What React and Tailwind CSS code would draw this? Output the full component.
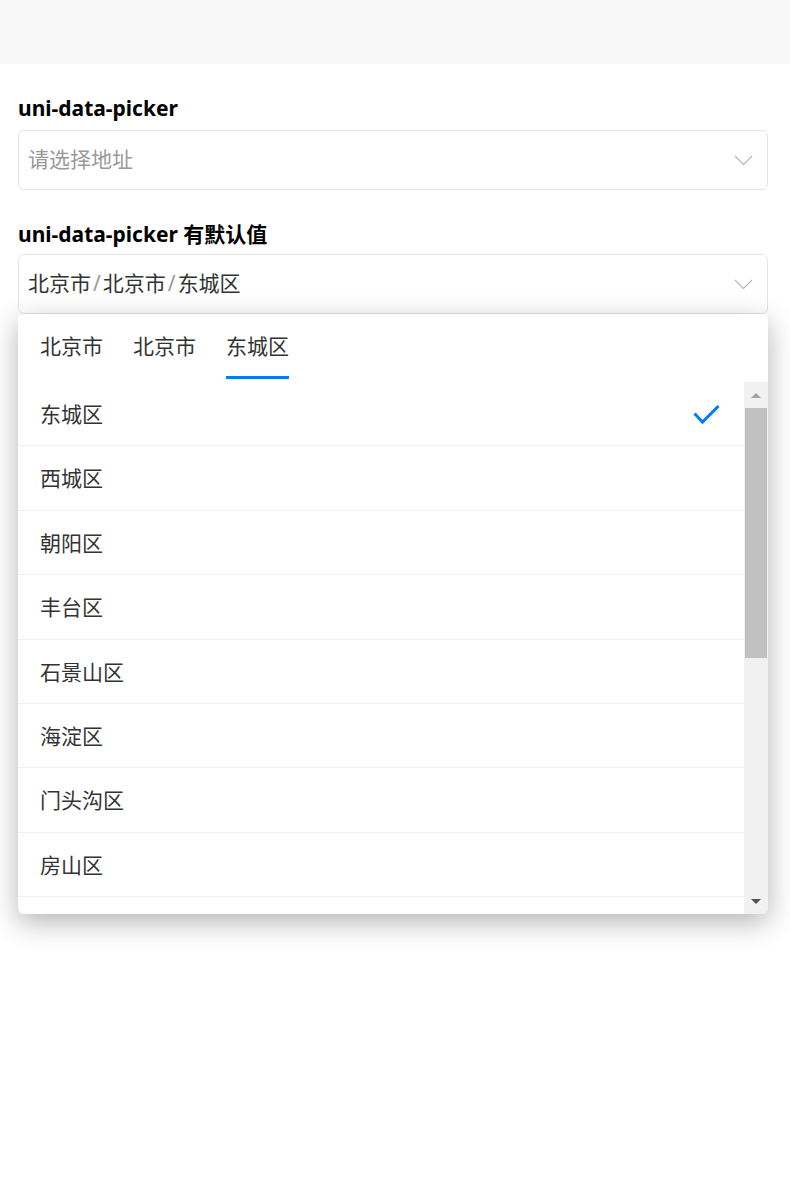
import React from "react";

const districts = ["东城区", "西城区", "朝阳区", "丰台区", "石景山区", "海淀区", "门头沟区", "房山区"];
const tabs = ["北京市", "北京市", "东城区"];

const Chevron = () => (
  <svg width="19" height="11" viewBox="0 0 19 11" fill="none" className="shrink-0">
    <polyline points="1,1 9.5,9.5 18,1" stroke="#b5b5b5" strokeWidth="1.2" />
  </svg>
);

const CheckMark = () => (
  <svg width="27" height="21" viewBox="0 0 27 21" fill="none">
    <polyline points="1.5,9.5 9.5,18 25.5,2" stroke="#007aff" strokeWidth="3" strokeLinejoin="miter" />
  </svg>
);

const DataPicker = () => {
  return (
    <div className="absolute top-full left-0 right-0 z-10 bg-white rounded-b-md rounded-t-sm shadow-[0_8px_28px_rgba(0,0,0,0.3)] overflow-hidden">
      <div className="h-[68px] flex gap-[30px] pl-[22px]">
        {tabs.map((t, i) => (
          <div
            key={i}
            className={
              "h-[65px] pt-[3px] flex items-center border-b-[3px] text-[21px] text-[#333] " +
              (i === tabs.length - 1 ? "border-[#007aff]" : "border-transparent")
            }
          >
            {t}
          </div>
        ))}
      </div>
      <div className="flex h-[532px]">
        <div className="flex-1 overflow-hidden">
          {districts.map((d, i) => (
            <div key={d} className="h-[64.4px] flex items-center justify-between pl-[22px] pr-[24px] pt-[2px] border-b border-[#f0f0f0] text-[21px] text-[#333]">
              <span>{d}</span>
              {i === 0 && <CheckMark />}
            </div>
          ))}
        </div>
        <div className="w-[24px] bg-[#f1f1f1] flex flex-col">
          <div className="h-[26px] flex items-center justify-center">
            <div className="w-0 h-0 border-x-[5px] border-x-transparent border-b-[5px] border-b-[#a3a3a3]" />
          </div>
          <div className="h-[250px] mx-[1px] bg-[#c1c1c1]" />
          <div className="flex-1" />
          <div className="h-[26px] flex items-center justify-center">
            <div className="w-0 h-0 border-x-[5px] border-x-transparent border-t-[5px] border-t-[#505050]" />
          </div>
        </div>
      </div>
    </div>
  );
};

export default function App() {
  return (
    <div className="min-h-screen bg-white font-['Noto_Sans','Noto_Sans_CJK_SC',sans-serif]">
      <div className="h-16 bg-[#f8f8f8]" />
      <div className="pl-[18px] pr-[22px] pt-[31px]">
        <div className="h-7 flex items-center text-[21px] font-bold text-black mb-[7px]">uni-data-picker</div>
        <div className="h-[60px] border border-[#e5e5e5] rounded-[6px] flex items-center justify-between pl-[9px] pr-[14px]">
          <span className="text-[21px] text-[#999]">请选择地址</span>
          <Chevron />
        </div>

        <div className="h-7 flex items-center text-[21px] font-bold text-black mt-[31px] mb-[5px]">uni-data-picker 有默认值</div>
        <div className="relative">
          <div className="h-[60px] border border-[#e5e5e5] rounded-[6px] flex items-center justify-between pl-[9px] pr-[14px]">
            <span className="text-[21px] text-[#333]">
              北京市<span className="text-[#999] mx-[2px]">/</span>北京市<span className="text-[#999] mx-[2px]">/</span>东城区
            </span>
            <Chevron />
          </div>
          <DataPicker />
        </div>
      </div>
    </div>
  );
}
